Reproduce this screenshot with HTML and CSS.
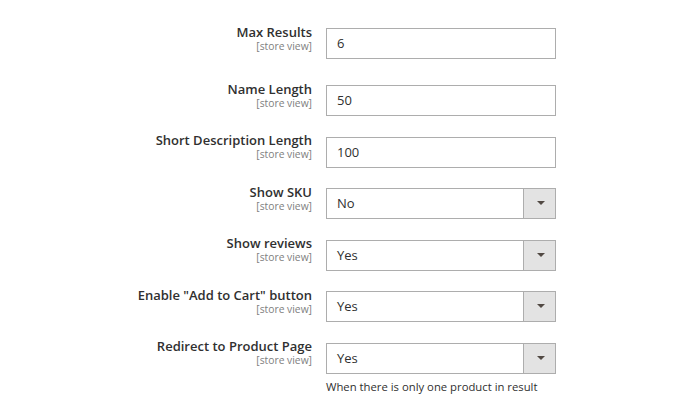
FILE: index.html
```html
<!DOCTYPE html>
<html>
<head>
<meta charset="utf-8">
<link rel="stylesheet" href="styles.css">
</head>
<body>
<div class="form">
  <div class="row first">
    <div class="label"><span class="title">Max Results</span><span class="scope">[store view]</span></div>
    <div class="control"><div class="input">6</div></div>
  </div>
  <div class="row">
    <div class="label"><span class="title">Name Length</span><span class="scope">[store view]</span></div>
    <div class="control"><div class="input">50</div></div>
  </div>
  <div class="row">
    <div class="label"><span class="title">Short Description Length</span><span class="scope">[store view]</span></div>
    <div class="control"><div class="input">100</div></div>
  </div>
  <div class="row">
    <div class="label"><span class="title">Show SKU</span><span class="scope">[store view]</span></div>
    <div class="control"><div class="input select"><span class="value">No</span><span class="arrow"></span></div></div>
  </div>
  <div class="row">
    <div class="label"><span class="title">Show reviews</span><span class="scope">[store view]</span></div>
    <div class="control"><div class="input select"><span class="value">Yes</span><span class="arrow"></span></div></div>
  </div>
  <div class="row">
    <div class="label"><span class="title">Enable "Add to Cart" button</span><span class="scope">[store view]</span></div>
    <div class="control"><div class="input select"><span class="value">Yes</span><span class="arrow"></span></div></div>
  </div>
  <div class="row">
    <div class="label"><span class="title">Redirect to Product Page</span><span class="scope">[store view]</span></div>
    <div class="control"><div class="input select"><span class="value">Yes</span><span class="arrow"></span></div>
      <div class="note">When there is only one product in result</div></div>
  </div>
</div>
</body>
</html>
```

FILE: styles.css
```css
html, body {
  margin: 0;
  padding: 0;
  background: #ffffff;
}
body {
  font-family: "Open Sans", "DejaVu Sans", sans-serif;
  color: #303030;
}
.form {
  padding-top: 23.5px;
  display: flex;
  flex-direction: column;
}
.row {
  display: flex;
  align-items: flex-start;
  gap: 14px;
  margin-bottom: 16.1px;
}
.row.first {
  margin-bottom: 21.5px;
}
.label {
  width: 312px;
  flex: none;
  text-align: right;
  display: flex;
  flex-direction: column;
  align-items: flex-end;
}
.title {
  font-size: 13px;
  font-weight: 600;
  line-height: 16px;
  color: #303030;
}
.scope {
  font-size: 10.3px;
  line-height: 12px;
  color: #808080;
}
.control {
  width: 230px;
  margin-top: 4.5px;
}
.input {
  box-sizing: border-box;
  height: 31px;
  border: 1px solid #adadad;
  background: #fff;
  font-size: 13px;
  line-height: 29px;
  padding-left: 10px;
  color: #303030;
  display: flex;
  align-items: center;
}
.select {
  padding-left: 0;
}
.select .value {
  flex: 1;
  padding-left: 10px;
}
.arrow {
  box-sizing: border-box;
  width: 32px;
  height: 29px;
  flex: none;
  background: #e3e3e3;
  border-left: 1px solid #adadad;
  position: relative;
}
.arrow::after {
  content: "";
  position: absolute;
  left: 13px;
  top: 12px;
  border-left: 4px solid transparent;
  border-right: 4px solid transparent;
  border-top: 4px solid #514943;
}
.note {
  margin-top: 5px;
  font-size: 11.3px;
  line-height: 15px;
  color: #303030;
}
```
